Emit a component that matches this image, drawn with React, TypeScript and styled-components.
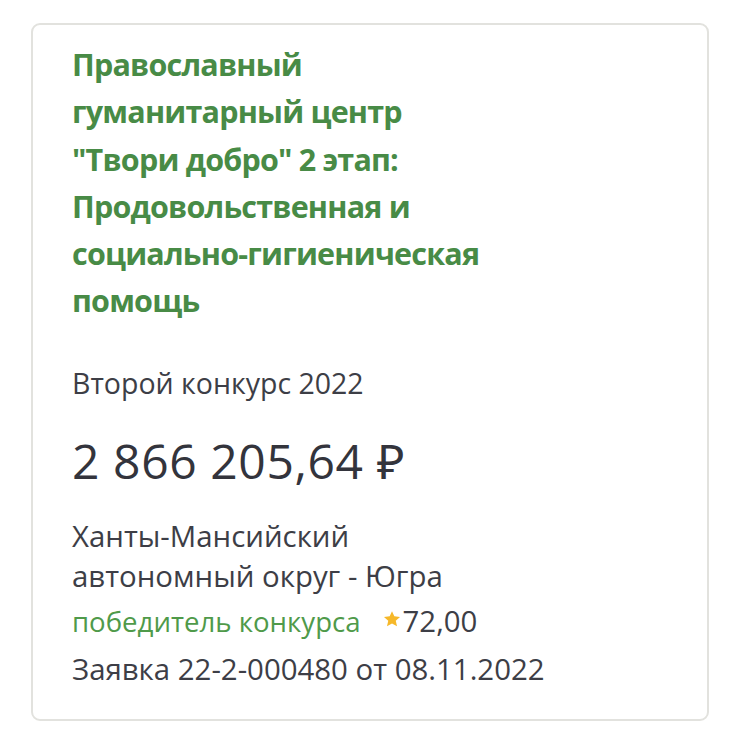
import * as React from "react";
import styled, { createGlobalStyle } from "styled-components";

const Global = createGlobalStyle`
  html, body {
    margin: 0;
    padding: 0;
    background: #fff;
  }
  body {
    font-family: "Open Sans", "Noto Sans", sans-serif;
  }
`;

const Page = styled.div`
  padding: 23px 31px 16px 31px;
`;

const Card = styled.article`
  border: 2px solid #e2e2de;
  border-radius: 9px;
  padding: 16px 40px 30px 39px;
  height: 698px;
  box-sizing: border-box;
`;

const Title = styled.h2`
  margin: 0;
  color: #488b46;
  font-weight: 700;
  font-size: 30.5px;
  letter-spacing: -0.8px;
  line-height: 47.3px;
  width: 430px;
`;

const Contest = styled.div`
  margin-top: 38px;
  color: #3d3e46;
  font-size: 28.5px;
  line-height: 40px;
`;

const Amount = styled.div`
  margin-top: 30px;
  color: #33343c;
  font-size: 48px;
  letter-spacing: 0.6px;
  line-height: 56px;
`;

const Line = styled.div<{ $gap?: number }>`
  margin-top: ${(p) => p.$gap ?? 0}px;
  color: #3d3e46;
  font-size: 29.4px;
  line-height: 40px;
  display: flex;
  align-items: center;
`;

const Winner = styled.span`
  color: #4f9a4a;
  font-size: 27.6px;
`;

const Region = styled.div`
  margin-top: 27px;
`;

const Score = styled.span`
  margin-left: 22px;
  display: inline-flex;
  align-items: center;
  gap: 2px;
`;

const Star = () => (
  <svg width="18" height="18" viewBox="0 0 24 24" style={{ marginTop: -3 }}>
    <path
      d="M12 1.5l3.1 6.9 7.6.8-5.7 5.1 1.7 7.5L12 17.9l-6.7 3.9 1.7-7.5-5.7-5.1 7.6-.8z"
      fill="#f6b829"
    />
  </svg>
);

export default function App() {
  return (
    <>
      <Global />
      <Page>
        <Card>
          <Title>
            Православный гуманитарный центр "Твори добро" 2 этап: Продовольственная и
            социально-гигиеническая помощь
          </Title>
          <Contest>Второй конкурс 2022</Contest>
          <Amount>2 866 205,64 ₽</Amount>
          <Region>
            <Line>Ханты-Мансийский</Line>
            <Line>автономный округ - Югра</Line>
          </Region>
          <Line $gap={5}>
            <Winner>победитель конкурса</Winner>
            <Score>
              <Star />
              72,00
            </Score>
          </Line>
          <Line $gap={8}>Заявка 22-2-000480 от 08.11.2022</Line>
        </Card>
      </Page>
    </>
  );
}
